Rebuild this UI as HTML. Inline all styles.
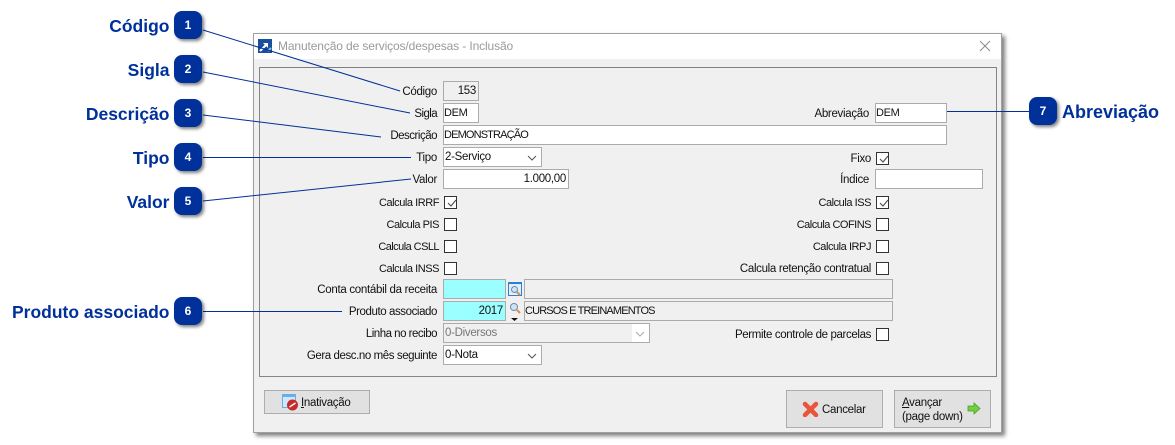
<!DOCTYPE html>
<html lang="pt">
<head>
<meta charset="utf-8">
<title>Manutenção de serviços/despesas</title>
<style>
html,body{margin:0;padding:0;background:#fff;}
#p{position:relative;width:1175px;height:445px;overflow:hidden;background:#fff;font-family:"Liberation Sans",sans-serif;font-size:11.5px;letter-spacing:-.3px;color:#111;}
#p div{position:absolute;box-sizing:border-box;white-space:nowrap;}
.win{left:253px;top:33px;width:749px;height:400px;background:#f0f0f0;border:1px solid #a0a0a0;box-shadow:3px 3px 4px rgba(0,0,0,.5);}
.tb{left:254px;top:34px;width:747px;height:25px;background:#fff;}
.title{left:278px;top:38px;font-size:12px;letter-spacing:-.12px;line-height:16px;color:#9a9a9a;}
.panel{left:259px;top:67px;width:738px;height:310px;border:1px solid #858585;border-top-color:#808080;}
.l{text-align:right;line-height:16px;height:16px;width:240px;margin-top:1px;}
.k{font-size:11px;letter-spacing:-.45px;}
.f{background:#fff;border:1px solid #ababab;height:20px;line-height:19px;padding-left:0;}
.f.r{text-align:right;padding-right:2px;}
.cap{font-size:11px;letter-spacing:-.85px;}
.g{background:#f0f0f0;}
.c{background:#9bffff;}
.cb{width:13px;height:13px;border:1px solid #333;background:#fff;}
.cb svg{position:absolute;left:1px;top:1px;}
.h{font-weight:bold;font-size:17.5px;letter-spacing:0;color:#00309a;text-align:right;line-height:24px;height:24px;width:169.5px;left:0;}
.n{width:28px;height:28px;background:#00309a;border-radius:8px;box-shadow:2px 2px 3px rgba(0,0,0,.5);color:#fff;font-weight:bold;font-size:12px;letter-spacing:0;line-height:28px;text-align:center;}
.b{background:#e1e1e1;border:1px solid #adadad;}
</style>
</head>
<body>
<div id="p">
<div class="win"></div>
<div class="tb"></div>
<svg style="position:absolute;left:258px;top:39px" width="14" height="14"><rect width="14" height="14" fill="#1a4f9c"/><path d="M2 12L8 6" stroke="#fff" stroke-width="2"/><path d="M5 4H10V9Z" fill="#fff"/><path d="M10 12L13 9" stroke="#9db8dc" stroke-width="2"/></svg>
<div class="title">Manutenção de serviços/despesas - Inclusão</div>
<svg style="position:absolute;left:978px;top:39px" width="14" height="14"><path d="M2 2L12 12M12 2L2 12" stroke="#8a8a8a" stroke-width="1" fill="none"/></svg>
<div class="panel"></div>

<div class="l" style="left:197px;top:83px">Código</div>
<div class="f g r" style="left:443px;top:81px;width:36px">153</div>
<div class="l" style="left:197px;top:105px;letter-spacing:-.6px">Sigla</div>
<div class="f cap" style="left:443px;top:103px;width:36px;padding-left:0;letter-spacing:-.3px">DEM</div>
<div class="l" style="left:197px;top:127px;letter-spacing:-.5px">Descrição</div>
<div class="f cap" style="left:443px;top:125px;width:504px;padding-left:0">DEMONSTRAÇÃO</div>
<div class="l" style="left:197px;top:149px">Tipo</div>
<div class="f" style="left:443px;top:147px;width:99px;line-height:18px;padding-left:1px">2-Serviço<svg style="position:absolute;right:3px;top:6px" width="12" height="8"><path d="M2 2L6 6L10 2" stroke="#555" fill="none"/></svg></div>
<div class="l" style="left:197px;top:171px">Valor</div>
<div class="f r" style="left:443px;top:169px;width:126px">1.000,00</div>

<div class="l k" style="left:199px;top:194px">Calcula IRRF</div>
<div class="cb" style="left:444px;top:196px"><svg width="11" height="11"><path d="M2 5L5 8L10 2" stroke="#555" stroke-width="1.2" fill="none"/></svg></div>
<div class="l k" style="left:199px;top:216px">Calcula PIS</div>
<div class="cb" style="left:444px;top:218px"></div>
<div class="l k" style="left:199px;top:238px;letter-spacing:-.55px">Calcula CSLL</div>
<div class="cb" style="left:444px;top:240px"></div>
<div class="l k" style="left:199px;top:260px">Calcula INSS</div>
<div class="cb" style="left:444px;top:262px"></div>

<div class="l" style="left:197px;top:281px">Conta contábil da receita</div>
<div class="f c" style="left:443px;top:279px;width:63px"></div>
<div style="left:508px;top:282px;width:14px;height:14px;background:#dfefff;border:1px solid #2f7fd0;border-top-width:2px;"></div>
<svg style="position:absolute;left:510px;top:285px" width="11" height="11"><circle cx="4.500" cy="4.500" r="3" fill="#cfe3f5" stroke="#6f8aa5"/><path d="M7 7L10 10" stroke="#e8883a" stroke-width="2"/></svg>
<div class="f g" style="left:524px;top:279px;width:369px"></div>

<div class="l" style="left:197px;top:303px;letter-spacing:-.42px">Produto associado</div>
<div class="f c r" style="left:443px;top:301px;width:63px">2017</div>
<svg style="position:absolute;left:509px;top:302px" width="12" height="20"><circle cx="5" cy="5" r="3.500" fill="#cfe3f5" stroke="#6f8aa5"/><path d="M8 8L11 11" stroke="#e8883a" stroke-width="2"/><path d="M2 16H9L5.500 19Z" fill="#111"/></svg>
<div class="f g cap" style="left:524px;top:301px;width:369px;padding-left:0">CURSOS E TREINAMENTOS</div>

<div class="l" style="left:197px;top:325px;letter-spacing:-.5px">Linha no recibo</div>
<div class="f g" style="left:443px;top:323px;width:207px;line-height:18px;color:#777;padding-left:1px">0-Diversos<div style="right:0;top:0;width:17px;height:18px;background:#fff"></div><svg style="position:absolute;right:3px;top:6px" width="12" height="8"><path d="M2 2L6 6L10 2" stroke="#aaa" fill="none"/></svg></div>
<div class="l" style="left:197px;top:347px;letter-spacing:-.42px">Gera desc.no mês seguinte</div>
<div class="f" style="left:443px;top:345px;width:99px;line-height:18px;padding-left:1px">0-Nota<svg style="position:absolute;right:3px;top:6px" width="12" height="8"><path d="M2 2L6 6L10 2" stroke="#555" fill="none"/></svg></div>

<div class="l" style="left:629px;top:105px">Abreviação</div>
<div class="f cap" style="left:875px;top:103px;width:72px;padding-left:0;letter-spacing:-.3px">DEM</div>
<div class="l" style="left:631px;top:150px">Fixo</div>
<div class="cb" style="left:876px;top:152px"><svg width="11" height="11"><path d="M2 5L5 8L10 2" stroke="#555" stroke-width="1.2" fill="none"/></svg></div>
<div class="l" style="left:629px;top:171px">Índice</div>
<div class="f" style="left:875px;top:169px;width:108px"></div>
<div class="l k" style="left:631px;top:194px">Calcula ISS</div>
<div class="cb" style="left:876px;top:196px"><svg width="11" height="11"><path d="M2 5L5 8L10 2" stroke="#555" stroke-width="1.2" fill="none"/></svg></div>
<div class="l k" style="left:631px;top:216px;letter-spacing:-.5px">Calcula COFINS</div>
<div class="cb" style="left:876px;top:218px"></div>
<div class="l k" style="left:631px;top:238px">Calcula IRPJ</div>
<div class="cb" style="left:876px;top:240px"></div>
<div class="l" style="left:631px;top:260px;letter-spacing:-.33px">Calcula retenção contratual</div>
<div class="cb" style="left:876px;top:262px"></div>
<div class="l" style="left:631px;top:326px;letter-spacing:-.37px">Permite controle de parcelas</div>
<div class="cb" style="left:876px;top:328px"></div>

<div class="b" style="left:264px;top:390px;width:106px;height:24px"></div>
<svg style="position:absolute;left:282px;top:394px" width="17" height="17"><rect x="0.500" y="0.500" width="13" height="13" fill="#cfe6fb" stroke="#6aaee8"/><rect x="1" y="1" width="12" height="2" fill="#6aaee8"/><circle cx="10.500" cy="11" r="5.500" fill="#c62a2a"/><path d="M7.500 13L13.500 9" stroke="#fff" stroke-width="1.500"/></svg>
<div style="left:301px;top:396px;line-height:14px"><u>I</u>nativação</div>

<div class="b" style="left:786px;top:390px;width:97px;height:38px"></div>
<svg style="position:absolute;left:802px;top:401px" width="17" height="16"><path d="M3 3L14 14M14 3L3 14" stroke="#e8553a" stroke-width="4.500" stroke-linecap="round" fill="none"/></svg>
<div style="left:822px;top:403px;line-height:14px">Cancelar</div>

<div class="b" style="left:894px;top:390px;width:97px;height:38px"></div>
<div style="left:902px;top:396px;line-height:14px"><u>A</u>vançar<br>(page down)</div>
<svg style="position:absolute;left:967px;top:402px" width="15" height="13"><path d="M1 4H7V1L13 6.500L7 12V9H1Z" fill="#6fd13c" stroke="#4f9a2a" stroke-width="0.800"/></svg>

<svg style="position:absolute;left:0;top:0" width="1175" height="445"><g stroke="#00309a" stroke-width="1" fill="none"><path d="M203 30L400 91"/><path d="M203 72L410 113"/><path d="M203 115L381 137"/><path d="M203 157.500H411"/><path d="M203 201L411 179"/><path d="M203 311.500H342"/><path d="M947 111.500H1030"/></g></svg>

<div class="h" style="top:14px">Código</div><div class="n" style="left:174px;top:11px">1</div>
<div class="h" style="top:58px">Sigla</div><div class="n" style="left:174px;top:55px">2</div>
<div class="h" style="top:102px">Descrição</div><div class="n" style="left:174px;top:99px">3</div>
<div class="h" style="top:146px">Tipo</div><div class="n" style="left:174px;top:143px">4</div>
<div class="h" style="top:190px">Valor</div><div class="n" style="left:174px;top:187px">5</div>
<div class="h" style="top:300px">Produto associado</div><div class="n" style="left:174px;top:297px">6</div>
<div class="n" style="left:1029px;top:97px">7</div>
<div class="h" style="left:1062px;top:100px;width:110px;text-align:left;font-size:18px">Abreviação</div>
</div>
</body>
</html>
